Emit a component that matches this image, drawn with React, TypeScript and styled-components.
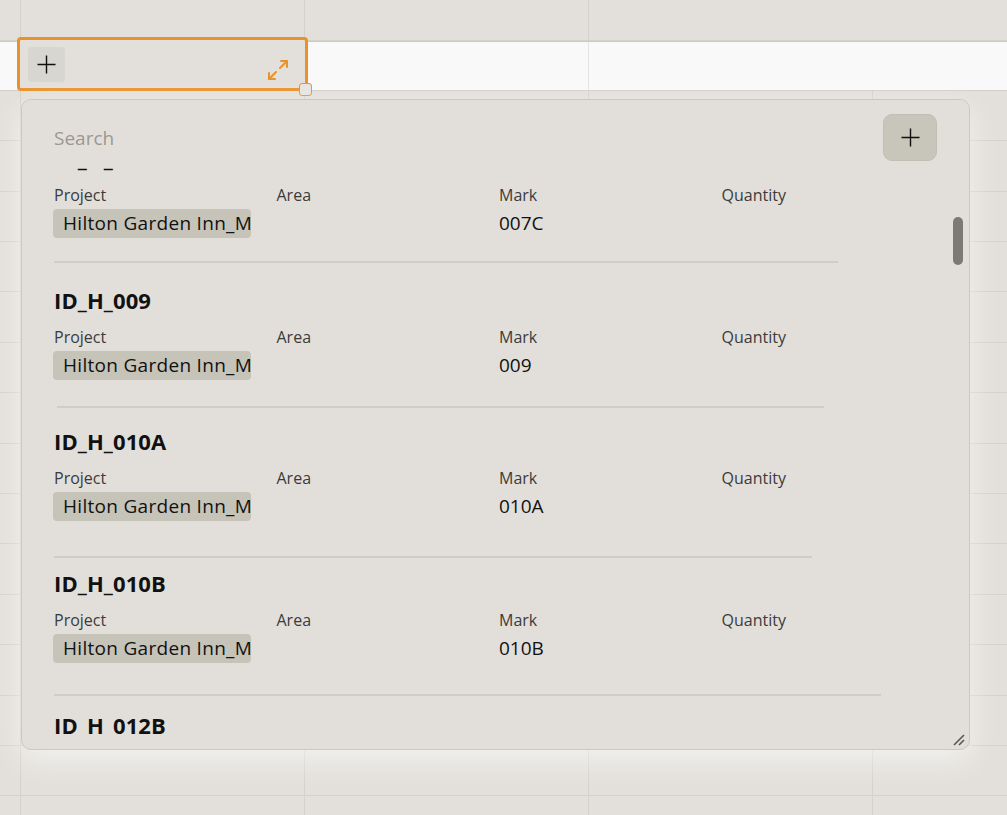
import React from "react";
import styled, { createGlobalStyle } from "styled-components";

const Global = createGlobalStyle`
  html, body { margin: 0; padding: 0; background: #e3e0db; }
  body { font-family: "Open Sans", "Noto Sans", sans-serif; overflow: hidden; }
  * { box-sizing: border-box; }
`;

const Page = styled.div`
  position: relative;
  width: 1007px;
  height: 815px;
  overflow: hidden;
  background: #e3e0db;
`;

const Sheet = styled.div`
  display: flex;
  flex-direction: column;
`;

const SheetRow = styled.div<{ $h: number; $active?: boolean }>`
  display: flex;
  flex: none;
  height: ${(p) => p.$h}px;
  background: ${(p) => (p.$active ? "#f9f9f9" : "transparent")};
  border-bottom: 1px solid ${(p) => (p.$active ? "#d2cfc9" : "#d5d2cc")};
  border-top: ${(p) => (p.$active ? "1px solid #cdcac4" : "none")};
`;

const SheetCell = styled.div<{ $w?: number; $active?: boolean; $noLine?: boolean }>`
  flex: ${(p) => (p.$w ? `0 0 ${p.$w}px` : "1 1 auto")};
  height: 100%;
  border-right: 1px solid
    ${(p) => (p.$noLine ? "transparent" : p.$active ? "#e4e4e2" : "#d5d2cc")};
`;

const Editor = styled.div`
  position: absolute;
  left: 17px;
  top: 37px;
  width: 291px;
  height: 54px;
  border: 3px solid #e9922c;
  border-radius: 4px;
  background: #e3e0db;
  display: flex;
  justify-content: space-between;
  align-items: flex-start;
  padding: 7px 15px 0 8px;
`;

const EditorButton = styled.div`
  width: 37px;
  height: 35px;
  border-radius: 4px;
  background: #d8d6d1;
  display: flex;
  align-items: center;
  justify-content: center;
`;

const ExpandIcon = styled.div`
  margin-top: 11px;
  width: 24px;
  height: 24px;
  display: flex;
`;

const Handle = styled.div`
  position: absolute;
  left: 299px;
  top: 83px;
  width: 13px;
  height: 13px;
  border: 1px solid #e9922c;
  border-radius: 3px;
  background: #e6e4e0;
`;

const Panel = styled.div`
  position: absolute;
  left: 21px;
  top: 99px;
  width: 949px;
  height: 651px;
  padding-bottom: 15px;
  border: 1px solid #cbc8c1;
  border-radius: 10px;
  background: #e2dfda;
  display: flex;
  flex-direction: column;
  overflow: hidden;
  box-shadow: 0 10px 30px rgba(255, 255, 255, 0.6);
`;

const Header = styled.div`
  flex: none;
  height: 67px;
  padding: 14px 32px 0 32px;
  display: flex;
  justify-content: space-between;
  align-items: flex-start;
  background: #e2dfda;
`;

const SearchInput = styled.input`
  margin-top: 11px;
  width: 320px;
  height: 26px;
  border: none;
  outline: none;
  background: transparent;
  padding: 0;
  font-family: "Open Sans", "Noto Sans", sans-serif;
  font-size: 19px;
  line-height: 26px;
  color: #222;
  &::placeholder {
    color: #9b9893;
  }
`;

const AddButton = styled.div`
  width: 54px;
  height: 47px;
  border-radius: 9px;
  background: #c8c5bb;
  border: 1px solid #c1beb4;
  display: flex;
  align-items: center;
  justify-content: center;
`;

const ScrollArea = styled.div`
  flex: 1 1 auto;
  overflow: hidden;
`;

const List = styled.div`
  padding: 0 32px;
  display: flex;
  flex-direction: column;
`;

const Item = styled.div`
  display: flex;
  flex-direction: column;
`;

const Title = styled.div`
  font-size: 22px;
  font-weight: 700;
  line-height: 30px;
  letter-spacing: 0.1px;
  color: #111;
  white-space: nowrap;
`;

const FieldGrid = styled.div<{ $gap: number }>`
  display: grid;
  grid-template-columns: repeat(4, 222.5px);
  margin-top: ${(p) => p.$gap}px;
`;

const Label = styled.div`
  font-size: 16px;
  line-height: 22px;
  color: #3b3b3b;
`;

const Chip = styled.div`
  width: 198px;
  height: 29px;
  margin-left: -1px;
  border-radius: 4px;
  background: #c6c3b8;
  padding-left: 10px;
  font-size: 19px;
  line-height: 29px;
  letter-spacing: 0.3px;
  color: #111;
  white-space: nowrap;
  overflow: hidden;
`;

const Value = styled.div`
  font-size: 19px;
  line-height: 29px;
  color: #111;
`;

const DividerSlot = styled.div<{ $top: number; $left: number }>`
  height: 46.7px;
  display: flex;
  flex-direction: column;
  padding-top: ${(p) => p.$top}px;
  padding-left: ${(p) => p.$left}px;
`;

const DividerLine = styled.div<{ $w: number }>`
  width: ${(p) => p.$w}px;
  height: 2px;
  background: #d0cdc6;
`;

const Thumb = styled.div`
  position: absolute;
  right: 6px;
  top: 117px;
  width: 10px;
  height: 48px;
  border-radius: 5px;
  background: #7b7a77;
`;

const Grip = styled.div`
  position: absolute;
  right: 4px;
  bottom: 3px;
  width: 12px;
  height: 12px;
  display: flex;
`;

const PlusGlyph = ({ size = 20 }: { size?: number }) => (
  <svg width={size} height={size} viewBox="0 0 20 20" fill="none">
    <path d="M10 0.5V19.5M0.5 10H19.5" stroke="#111" strokeWidth="1.5" />
  </svg>
);

const ExpandGlyph = () => (
  <svg width="24" height="24" viewBox="0 0 24 24" fill="none" stroke="#e9922c" strokeWidth="2" strokeLinecap="round" strokeLinejoin="round">
    <path d="M15 3h6v6" />
    <path d="m21 3-7 7" />
    <path d="m3 21 7-7" />
    <path d="M9 21H3v-6" />
  </svg>
);

const GripGlyph = () => (
  <svg width="12" height="12" viewBox="0 0 12 12" fill="none" stroke="#555" strokeWidth="1.6">
    <path d="M11 1L1 11" />
    <path d="M11 6L6 11" />
  </svg>
);

type Row = { id: string; mark: string; div: { top: number; left: number; w: number } };

const rows: Row[] = [
  { id: "ID_H_007C", mark: "007C", div: { top: 23.4, left: 0, w: 784 } },
  { id: "ID_H_009", mark: "009", div: { top: 26.4, left: 3, w: 767 } },
  { id: "ID_H_010A", mark: "010A", div: { top: 35, left: 0, w: 758 } },
  { id: "ID_H_010B", mark: "010B", div: { top: 31.3, left: -1, w: 827 } },
  { id: "ID_H_012B", mark: "012B", div: { top: 28, left: 0, w: 780 } },
];

const colWidths = [20.5, 284, 284, 284];

export default function App() {
  const sheetRows = [40.5, ...Array.from({ length: 16 }, () => 50.4)];
  return (
    <Page>
      <Global />
      <Sheet>
        {sheetRows.map((h, i) => (
          <SheetRow key={i} $h={h} $active={i === 1}>
            {colWidths.map((w, j) => (
              <SheetCell key={j} $w={w} $active={i === 1} $noLine={j === 3 && i < 2} />
            ))}
            <SheetCell $active={i === 1} $noLine />
          </SheetRow>
        ))}
      </Sheet>

      <Editor>
        <EditorButton>
          <PlusGlyph size={19} />
        </EditorButton>
        <ExpandIcon>
          <ExpandGlyph />
        </ExpandIcon>
      </Editor>
      <Handle />

      <Panel>
        <Header>
          <SearchInput placeholder="Search" />
          <AddButton>
            <PlusGlyph size={19} />
          </AddButton>
        </Header>
        <ScrollArea
          ref={(el) => {
            if (el) el.scrollTop = 24;
          }}
        >
          <List>
            {rows.map((r) => (
              <Item key={r.id}>
                <Title>{r.id}</Title>
                <FieldGrid $gap={11}>
                  <Label>Project</Label>
                  <Label>Area</Label>
                  <Label>Mark</Label>
                  <Label>Quantity</Label>
                </FieldGrid>
                <FieldGrid $gap={3}>
                  <Chip>Hilton Garden Inn_Marriott</Chip>
                  <Value />
                  <Value>{r.mark}</Value>
                  <Value />
                </FieldGrid>
                <DividerSlot $top={r.div.top} $left={r.div.left}>
                  <DividerLine $w={r.div.w} />
                </DividerSlot>
              </Item>
            ))}
          </List>
        </ScrollArea>
        <Thumb />
        <Grip>
          <GripGlyph />
        </Grip>
      </Panel>
    </Page>
  );
}
